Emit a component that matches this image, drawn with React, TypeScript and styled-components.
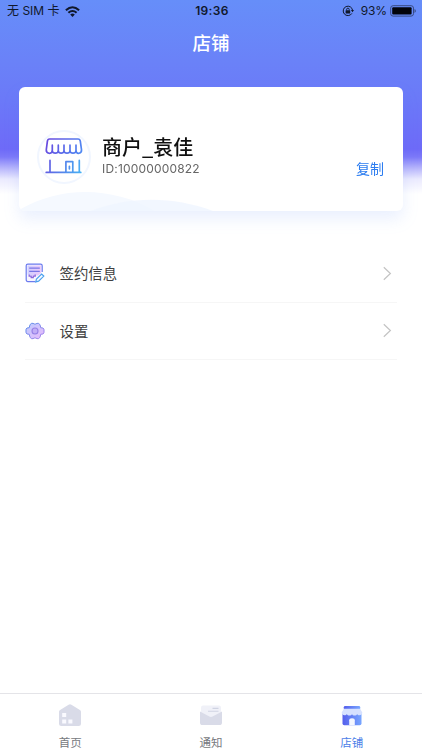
import React from "react";
import styled, { createGlobalStyle } from "styled-components";

const GlobalStyle = createGlobalStyle`
  * { box-sizing: border-box; }
  body { margin: 0; background: #fff; font-family: Inter, "Noto Sans CJK SC", sans-serif; }
`;

const Screen = styled.div`
  width: 422px;
  height: 750px;
  display: flex;
  flex-direction: column;
  background: #fff;
  overflow: hidden;
`;

const Hero = styled.header`
  height: 245px;
  flex: none;
  display: flex;
  flex-direction: column;
  background:
    linear-gradient(rgba(255,255,255,0) 149px, rgba(255,255,255,.1) 157px, rgba(255,255,255,.5) 168px, rgba(255,255,255,.86) 179px, #fff 194px),
    linear-gradient(#668ef9 0, #6a82f8 60px, #6b79f8 100px, #6e6af8 150px);
`;

const StatusBar = styled.div`
  height: 22px;
  padding: 0 5px 0 7px;
  display: grid;
  grid-template-columns: 1fr auto 1fr;
  align-items: center;
  color: #10182c;
  font-size: 12px;
  line-height: 22px;
`;

const StatusSide = styled.div<{ $end?: boolean }>`
  display: flex;
  align-items: center;
  justify-content: ${(p) => (p.$end ? "flex-end" : "flex-start")};
  white-space: nowrap;
`;

const Carrier = styled.span`
  width: 53px;
  margin-right: 5px;
  font-size: 12px;
`;

const Clock = styled.span`
  font-weight: 600;
  font-size: 12px;
  letter-spacing: 0.35px;
`;

const Percent = styled.span`
  margin: 0 3px 0 7px;
  letter-spacing: -0.15px;
`;

const NavTitle = styled.h1`
  margin: 0;
  height: 42px;
  line-height: 43px;
  text-align: center;
  color: #fff;
  font-size: 18.5px;
  font-weight: 500;
`;

const CardShadow = styled.div`
  width: 422px;
  filter: drop-shadow(0 8px 8px rgba(83, 135, 246, 0.12));
`;

const Card = styled.section`
  position: relative;
  width: 384px;
  height: 124px;
  margin: 23px 19px 0;
  padding: 15px 19px 0 18px;
  display: flex;
  align-items: center;
  border-radius: 6px;
  background: #fff;
  overflow: hidden;
`;

const Waves = styled.svg`
  position: absolute;
  left: 0;
  bottom: 0;
`;

const Avatar = styled.div`
  position: relative;
  width: 54px;
  height: 54px;
  flex: none;
  border: 2px solid #f1f6ff;
  border-radius: 50%;
  background: #fff;
`;

const Merchant = styled.div`
  position: relative;
  flex: 1;
  margin: 0 0 3px 11px;
`;

const Name = styled.div`
  color: #101010;
  font: 500 20px/27px "Noto Sans CJK SC", sans-serif;
`;

const MerchantId = styled.div`
  height: 18px;
  margin-top: 0;
  line-height: 18px;
  color: #666;
  font-size: 12px;
  letter-spacing: 0.18px;
`;

const CopyButton = styled.button`
  align-self: flex-end;
  margin-bottom: 33px;
  border: 0;
  padding: 0;
  background: none;
  color: #2b7cf0;
  font: 14px/20px "Noto Sans CJK SC", sans-serif;
`;

const Menu = styled.main`
  flex: 1;
  padding: 0 25px;
`;

const MenuRow = styled.div`
  height: 57.5px;
  display: flex;
  align-items: center;
  border-bottom: 1px solid #f6f6f6;
`;

const MenuLabel = styled.span`
  flex: 1;
  margin-left: 14.5px;
  padding-top: 2px;
  color: #3f3f3f;
  font-size: 14.4px;
  line-height: 20px;
`;

const Chevron = styled.svg`
  margin-right: 5px;
`;

const TabBar = styled.nav`
  height: 57px;
  flex: none;
  display: grid;
  grid-template-columns: repeat(3, 1fr);
  border-top: 1px solid #e4e4e8;
`;

const Tab = styled.div<{ $active?: boolean }>`
  display: flex;
  flex-direction: column;
  align-items: center;
  padding-top: 9px;
  color: ${(p) => (p.$active ? "#4c7ee8" : "#777a80")};
  font-size: 11.5px;
  line-height: 16px;

  svg { flex: none; margin-bottom: 8px; }
`;

const Wifi = () => (
  <svg width="15" height="11" viewBox="0 0 15 11">
    <g fill="none" stroke="#10182c" strokeWidth="2.1">
      <path d="M.9 4.2Q7.5-1.7 14.1 4.2" />
      <path d="M3.4 6.8Q7.5 3.2 11.6 6.8" />
    </g>
    <path d="M5.2 8.5Q7.5 6.7 9.8 8.5L7.5 10.9Z" fill="#10182c" />
  </svg>
);

const RotationLock = () => (
  <svg width="12" height="12" viewBox="0 0 12 12">
    <path d="M9.9 8.4A4.7 4.7 0 1 1 10.6 5.5" fill="none" stroke="#10182c" />
    <path d="M8.9 5h3.1l-1.5 2.2Z" fill="#10182c" />
    <rect x="3.6" y="5.2" width="4.6" height="3.2" rx=".4" fill="#10182c" />
    <path d="M4.6 5.3V4.5a1.3 1.3 0 0 1 2.6 0v.8" fill="none" stroke="#10182c" strokeWidth=".9" />
  </svg>
);

const Battery = () => (
  <svg width="27" height="12" viewBox="0 0 27 12">
    <rect x=".7" y=".7" width="22.8" height="10.4" rx="2.4" fill="none" stroke="#384a82" />
    <rect x="2.2" y="2.2" width="19.4" height="7.4" rx="1" fill="#02040a" />
    <path d="M24.5 4c1.8.6 1.8 3.3 0 3.9Z" fill="#384a82" />
  </svg>
);

const Storefront = () => (
  <svg width="50" height="50" viewBox="0 0 50 50">
    <defs>
      <linearGradient id="roof" x1="7" y1="8" x2="43" y2="23" gradientUnits="userSpaceOnUse">
        <stop stopColor="#6847df" /><stop offset="1" stopColor="#4f8cf3" />
      </linearGradient>
      <linearGradient id="base" x1="7" y1="30" x2="43" y2="42" gradientUnits="userSpaceOnUse">
        <stop stopColor="#6458e2" /><stop offset="1" stopColor="#46b4f5" />
      </linearGradient>
    </defs>
    <g fill="none" strokeWidth="1.7" strokeLinecap="round" strokeLinejoin="round">
      <path d="M10.5 7h28.500q2 0 2.300 2.200l1.200 8.500c.5 4.400-5 4.500-5.500 1.500c-.4 2.600-5.600 2.600-6 0c-.4 2.600-5.600 2.600-6 0c-.4 2.600-5.300 2.600-5.700 0c-.4 2.600-5.600 2.600-6 0c-.5 3-6.500 2.900-6-1.500l1.100-8.500q.3-2.200 2.100-2.200Z" stroke="url(#roof)" />
      <path d="M13.300 19.200v-6M19.300 19.200v-6M25 19.200v-6M31 19.200v-6M37 19.200v-6" stroke="url(#roof)" />
      <path d="M7.2 40.4h34.6M11 40V28.4M40.3 40V28.4M26.9 40V29.7h6.9V40M30.4 34.3v2.5" stroke="url(#base)" />
    </g>
  </svg>
);

const ContractIcon = () => (
  <svg width="20" height="20" viewBox="0 0 20 20">
    <defs>
      <linearGradient id="contract" x2="1"><stop stopColor="#d0cfff" /><stop offset="1" stopColor="#ecc8fa" /></linearGradient>
    </defs>
    <path d="M10.5 18.6H3Q1.2 18.6 1.2 16.8V2.8Q1.2 1.2 2.8 1.2h12.8Q17.2 1.2 17.2 2.7V9" fill="#f8f5ff" stroke="#6b7bee" strokeWidth="1.2" />
    <path d="M2.5 2.5h13.4v7.7L13 12.5H8l-5.5-1Z" fill="url(#contract)" />
    <path d="M4.2 5.2h10.6M4.2 8.3h10.6" stroke="#7976e6" strokeWidth="1.2" />
    <path d="M4.2 11.6v1.6h2v1.5h2v-1.5h2v-1.6" fill="none" stroke="#8b67df" strokeWidth="1.3" />
    <path d="M11.4 16.2l5.2-5.2 2.2 2.1-5.2 5.1-2.8.7Z" fill="#f5faff" stroke="#4ba0ee" strokeWidth="1.2" />
  </svg>
);

const SettingsIcon = () => (
  <svg width="20" height="20" viewBox="0 0 20 20">
    <defs>
      <linearGradient id="settings" x2="1" y2="1"><stop stopColor="#bdccff" /><stop offset="1" stopColor="#e8b9fa" /></linearGradient>
      <linearGradient id="gear-line" x2="1" y2="1"><stop stopColor="#568ee9" /><stop offset="1" stopColor="#b083ee" /></linearGradient>
    </defs>
    <path d="M15.700 13.300Q15.600 15 14.700 16.700Q13.200 18.300 12 17.600Q10 15.900 8 17.600Q6.800 18.300 5.300 16.700Q4.400 15 4.300 13.300Q1.400 13.400 1.100 11.900Q.8 10 1.100 8.100Q1.400 6.600 4.300 6.700Q4.400 5 5.300 3.300Q6.800 1.700 8 2.400Q10 4.100 12 2.400Q13.200 1.700 14.700 3.300Q15.600 5 15.700 6.700Q18.600 6.600 18.900 8.100Q19.200 10 18.900 11.900Q18.600 13.400 15.700 13.300Z" fill="url(#settings)" stroke="url(#gear-line)" strokeLinejoin="round" />
    <circle cx="10" cy="10" r="3" fill="#c1adf7" stroke="#9781e6" strokeWidth="1.1" />
  </svg>
);

const HomeIcon = () => (
  <svg width="24" height="24" viewBox="0 0 24 24">
    <path d="M1 8.8q0-1.2 1.1-1.8L10.6 1.7q1.4-.9 2.8 0L21.9 7Q23 7.6 23 8.8v11.7q0 2.5-2.5 2.5h-17Q1 23 1 20.5Z" fill="#d9dbe8" />
    <path d="M4.2 10h4v4h-4zM4.2 16.4h4v4h-4zM10.4 16.4h4v4h-4z" fill="#fafaff" />
  </svg>
);

const MailIcon = () => (
  <svg width="24" height="24" viewBox="0 0 24 24">
    <rect x="2" y="2.5" width="20" height="18" rx="2" fill="#f0f1f8" />
    <path d="M13.5 5.4h6M9 8.2h10.5" stroke="#cfd3e2" strokeWidth="1.1" />
    <path d="M1 8.4l9.4 5.1q1.6.9 3.2 0L23 8.4v11q0 2.6-2.6 2.6H3.6Q1 22 1 19.4Z" fill="#d9dbe8" />
  </svg>
);

const ShopIcon = () => (
  <svg width="24" height="24" viewBox="0 0 24 24">
    <defs>
      <linearGradient id="shop" x2="1"><stop stopColor="#555fec" /><stop offset="1" stopColor="#78a6ff" /></linearGradient>
    </defs>
    <path d="M2.500 10.5h19v9.7q0 2-1.8 2H4.300Q2.500 22.200 2.500 20.200Z" fill="url(#shop)" />
    <path d="M9.2 22.200v-5q0-2 2.8-2t2.8 2v5Z" fill="#f4f7ff" />
    <path d="M4.300 5h15.400L22.300 9.600c0 3.500-4.600 3.300-5.200 1.300c-.6 2-4.500 2-5.100 0c-.6 2-4.500 2-5.100 0c-.6 2-5.200 2.200-5.200-1.300Z" fill="#d6e1ff" />
    <path d="M3.800 5.800V4.300Q3.900 3 5.200 3h13.600q1.400 0 1.400 1.300v1.500Z" fill="url(#shop)" />
  </svg>
);

const Arrow = () => (
  <Chevron width="10" height="15" viewBox="0 0 10 15">
    <path d="M1.8 1.2L8.4 7.5 1.8 13.8" fill="none" stroke="#c3c3c3" strokeWidth="1.2" />
  </Chevron>
);

const entries = [
  { label: "签约信息", icon: <ContractIcon /> },
  { label: "设置", icon: <SettingsIcon /> },
];

const tabs = [
  { label: "首页", icon: <HomeIcon /> },
  { label: "通知", icon: <MailIcon /> },
  { label: "店铺", icon: <ShopIcon />, active: true },
];

export default function App() {
  return (
    <>
      <GlobalStyle />
      <Screen>
        <Hero>
          <StatusBar>
            <StatusSide><Carrier>无 SIM 卡</Carrier><Wifi /></StatusSide>
            <Clock>19:36</Clock>
            <StatusSide $end><RotationLock /><Percent>93%</Percent><Battery /></StatusSide>
          </StatusBar>
          <NavTitle>店铺</NavTitle>
          <CardShadow>
            <Card>
              <Waves width="384" height="20" viewBox="0 0 384 20">
                <path d="M0 19C42-5 92-5 136 20H0Z" fill="#f5f9ff" />
                <path d="M72 20C110 5 154 5 194 20Z" fill="#eff5ff" fillOpacity=".8" />
              </Waves>
              <Avatar><Storefront /></Avatar>
              <Merchant>
                <Name>商户_袁佳</Name>
                <MerchantId>ID:10000000822</MerchantId>
              </Merchant>
              <CopyButton>复制</CopyButton>
            </Card>
          </CardShadow>
        </Hero>
        <Menu>
          {entries.map((e) => (
            <MenuRow key={e.label}>{e.icon}<MenuLabel>{e.label}</MenuLabel><Arrow /></MenuRow>
          ))}
        </Menu>
        <TabBar>
          {tabs.map((t) => (
            <Tab key={t.label} $active={t.active}>{t.icon}{t.label}</Tab>
          ))}
        </TabBar>
      </Screen>
    </>
  );
}
